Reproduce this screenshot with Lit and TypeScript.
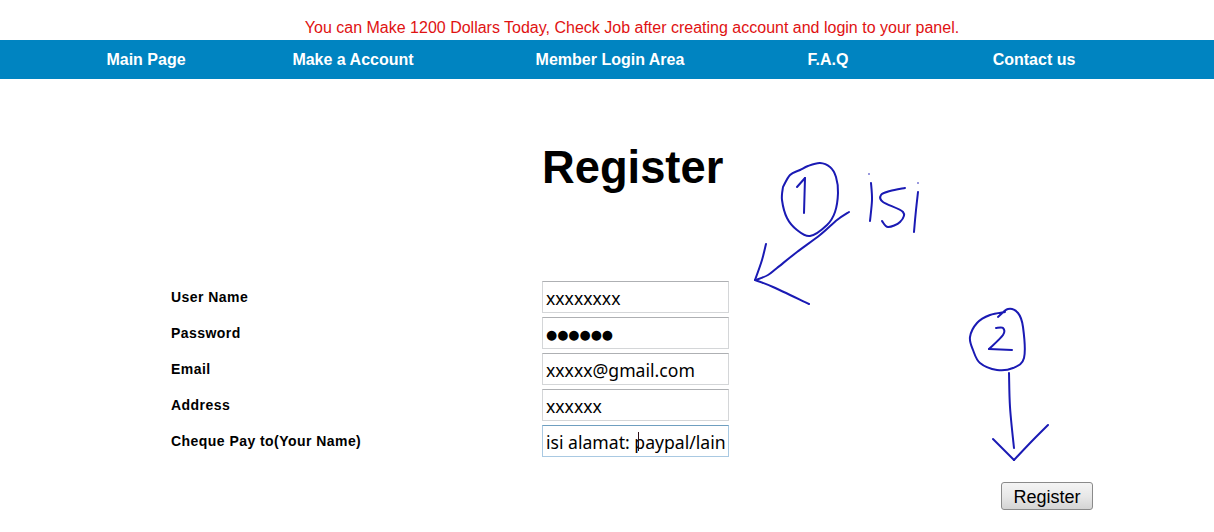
import { LitElement, html, css, svg } from "lit";
import { customElement } from "lit/decorators.js";

type Pt = [number, number];

const strokes: string = [
  "783,187 790,175 800,170 808,166 820,163 830,167 836,177 838,193 835,212 827,225 810,236 797,230 787,218 782,200 783,187",
  "797,187 805,178",
  "805,178 804,213",
  "849,212 837,220 820,235 797,252 777,268 768,275 756,280",
  "766,244 762,260 755,280",
  "755,280 773,287 809,304",
  "871,183 872,200 870,221",
  "905,188 890,191 881,195 883,202 903,212 900,222 888,227 882,221",
  "918,192 916,210 914,232",
  "998,317 1008,309 1018,313 1023,327 1024,358 1013,368 997,370 980,363 973,350 970,337 977,323 990,315 1005,312",
  "996,328 1003,328 1003,335 989,349",
  "989,349 1012,350",
  "1009,373 1010,407 1014,448",
  "993,439 1014,460",
  "1014,460 1033,440 1048,425",
].join("|");

/* Catmull-Rom smoothing, so the hand-drawn marks read as pen strokes. */
function smooth(points: string): string {
  const p: Pt[] = points.split(" ").map((s) => s.split(",").map(Number) as Pt);
  let d = `M${p[0][0]} ${p[0][1]}`;
  for (let i = 0; i < p.length - 1; i++) {
    const a = p[Math.max(i - 1, 0)];
    const b = p[i];
    const c = p[i + 1];
    const e = p[Math.min(i + 2, p.length - 1)];
    const c1x = b[0] + (c[0] - a[0]) / 6;
    const c1y = b[1] + (c[1] - a[1]) / 6;
    const c2x = c[0] - (e[0] - b[0]) / 6;
    const c2y = c[1] - (e[1] - b[1]) / 6;
    d += ` C${c1x.toFixed(1)} ${c1y.toFixed(1)} ${c2x.toFixed(1)} ${c2y.toFixed(1)} ${c[0]} ${c[1]}`;
  }
  return d;
}

const navLinks = ["Main Page", "Make a Account", "Member Login Area", "F.A.Q", "Contact us"];

const rows = [
  { label: "User Name", value: "xxxxxxxx" },
  { label: "Password", value: "●●●●●●", dots: true },
  { label: "Email", value: "xxxxx@gmail.com" },
  { label: "Address", value: "xxxxxx" },
  { label: "Cheque Pay to(Your Name)", value: "isi alamat: paypal/lain", active: true },
];

@customElement("app-root")
export class AppRoot extends LitElement {
  static styles = css`
    :host {
      display: block;
      position: relative;
      height: 532px;
      overflow: hidden;
      background: #fff;
      font-family: "Liberation Sans", Arial, sans-serif;
      color: #000;
    }
    .notice {
      height: 40px;
      box-sizing: border-box;
      padding: 18px 0 0 50px;
      text-align: center;
      font-size: 16px;
      line-height: 19px;
      color: #e01212;
    }
    nav {
      display: grid;
      grid-template-columns: 200px 214px 300px 136px 276px;
      height: 39px;
      padding-left: 46px;
      background: #0084c1;
    }
    nav a {
      align-self: center;
      text-align: center;
      color: #fff;
      font-size: 16px;
      font-weight: 700;
      line-height: 39px;
      text-decoration: none;
    }
    h1 {
      margin: 0;
      padding: 63px 0 0 542px;
      font-size: 45.3px;
      line-height: 52px;
      font-weight: 700;
      height: 140px;
      box-sizing: border-box;
    }
    .form {
      display: grid;
      grid-template-columns: 371px 187px;
      grid-auto-rows: 32px;
      row-gap: 4px;
      padding: 62px 0 0 171px;
    }
    label {
      font-size: 14px;
      font-weight: 700;
      line-height: 32px;
      letter-spacing: 0.45px;
    }
    .field {
      position: relative;
    }
    input {
      display: block;
      width: 100%;
      height: 32px;
      box-sizing: border-box;
      margin: 0;
      padding: 2px 3px 0;
      border: 1px solid #d4d6d8;
      border-top-color: #aeb0b3;
      border-radius: 0;
      background: #fff;
      color: #000;
      font-family: "Noto Sans", sans-serif;
      font-size: 17.6px;
      outline: none;
    }
    input.active {
      border-color: #a9c9e2;
      border-top-color: #6f9fc0;
    }
    input.dots {
      font-family: "DejaVu Sans", sans-serif;
      font-size: 12.8px;
    }
    .caret {
      position: absolute;
      left: 96px;
      top: 7px;
      width: 1px;
      height: 19px;
      background: #301018;
    }
    .actions {
      display: flex;
      justify-content: flex-end;
      padding: 25px 121px 0 0;
    }
    button {
      width: 92px;
      height: 28px;
      padding: 0;
      border: 1px solid #8a8a8a;
      border-radius: 3px;
      background: linear-gradient(#f4f4f4, #e8e8e8 50%, #d4d4d4);
      color: #000;
      font-family: "Liberation Sans", Arial, sans-serif;
      font-size: 18px;
      line-height: 28px;
    }
    .ink {
      position: absolute;
      left: 0;
      top: 0;
      pointer-events: none;
    }
    .ink path {
      fill: none;
      stroke: #1a1ab4;
      stroke-width: 2;
      stroke-linecap: round;
      stroke-linejoin: round;
    }
    .ink circle {
      fill: #1a1ab4;
    }
  `;

  render() {
    return html`
      <div class="notice">You can Make 1200 Dollars Today, Check Job after creating account and login to your panel.</div>
      <nav>${navLinks.map((l) => html`<a href="#">${l}</a>`)}</nav>
      <h1>Register</h1>
      <div class="form">
        ${rows.map(
          (r) => html`
            <label>${r.label}</label>
            <div class="field">
              <input class="${r.active ? "active" : ""} ${r.dots ? "dots" : ""}" type="text" .value=${r.value} />
              ${r.active ? html`<span class="caret"></span>` : ""}
            </div>
          `
        )}
      </div>
      <div class="actions"><button>Register</button></div>
      <svg class="ink" width="1214" height="532" viewBox="0 0 1214 532">
        ${strokes.split("|").map((p) => svg`<path d=${smooth(p)}></path>`)}
        <circle cx="869" cy="174" r="0.8"></circle>
        <circle cx="918" cy="183" r="0.8"></circle>
      </svg>
    `;
  }
}
